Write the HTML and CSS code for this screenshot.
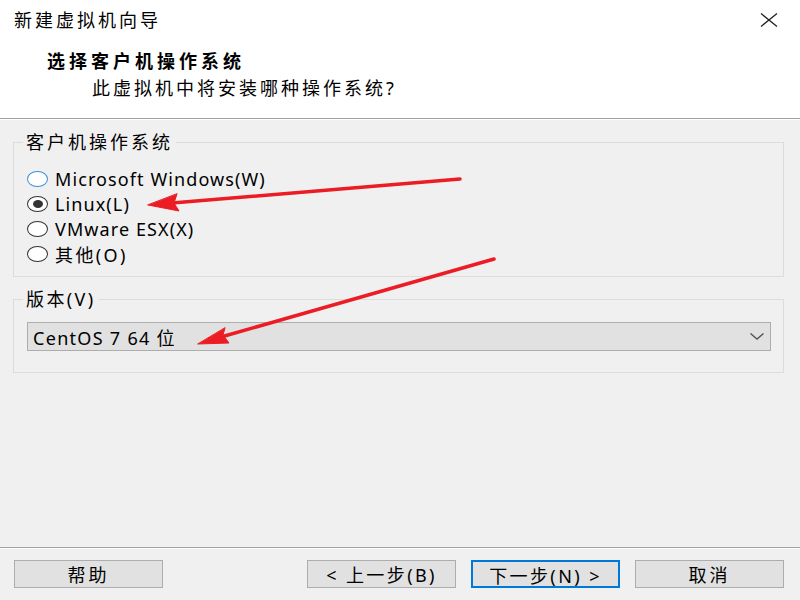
FILE: index.html
```html
<!DOCTYPE html>
<html lang="zh-CN">
<head>
	<meta charset="utf-8">
	<title>新建虚拟机向导</title>
	<link rel="stylesheet" href="styles.css">
</head>
<body>
<div class="wizard">
	<div class="header">
		<div class="titlebar">
			<span class="zh">新建虚拟机向导</span>
			<svg class="close" width="18" height="14" viewBox="0 0 18 14">
				<path d="M1 0.5 L17 13.5 M17 0.5 L1 13.5" stroke="#222" stroke-width="1.3" fill="none"/>
			</svg>
		</div>
		<div class="heading">选择客户机操作系统</div>
		<div class="subheading">此虚拟机中将安装哪种操作系统?</div>
	</div>

	<div class="content">
		<fieldset class="group os-group">
			<legend class="zh">客户机操作系统</legend>
			<div class="radio-row"><span class="radio focus"></span>Microsoft Windows(W)</div>
			<div class="radio-row"><span class="radio checked"></span>Linux(L)</div>
			<div class="radio-row"><span class="radio"></span>VMware ESX(X)</div>
			<div class="radio-row mixed"><span class="radio"></span>其他(O)</div>
		</fieldset>

		<fieldset class="group version-group">
			<legend class="mixed">版本(V)</legend>
			<div class="select">
				<span>CentOS 7 64 位</span>
				<svg width="14" height="7" viewBox="0 0 14 7">
					<path d="M0.5 0.5 L7 6 L13.5 0.5" stroke="#555" stroke-width="1.4" fill="none"/>
				</svg>
			</div>
		</fieldset>
	</div>

	<div class="footer">
		<button class="button zh">帮助</button>
		<div class="spacer"></div>
		<div class="nav">
			<button class="button mixed">&lt; 上一步(B)</button>
			<button class="button mixed default">下一步(N) &gt;</button>
			<button class="button zh">取消</button>
		</div>
	</div>

	<!-- red annotation arrows drawn over the dialog -->
	<svg class="arrows" width="800" height="600" viewBox="0 0 800 600">
		<g fill="#ec1c24" stroke="#ec1c24" stroke-linecap="round">
			<line x1="460" y1="179" x2="172" y2="203" stroke-width="3.5"/>
			<polygon points="148,205 179,211 174,203 177,194" stroke-width="1" stroke-linejoin="round"/>
			<line x1="494" y1="259" x2="221" y2="337" stroke-width="3.5"/>
			<polygon points="198,344 229,343 223,335 225,328" stroke-width="1" stroke-linejoin="round"/>
		</g>
	</svg>
</div>
</body>
</html>
```

FILE: styles.css
```css
body {
	margin: 0;
	background: #f0f0f0;
	font-family: "Noto Sans", "Noto Sans CJK SC", sans-serif;
	font-size: 18px;
	color: #000;
}

.wizard {
	position: relative;
	width: 800px;
	height: 600px;
	display: flex;
	flex-direction: column;
	overflow: hidden;
}

.zh {
	letter-spacing: 3px;
}

.mixed {
	letter-spacing: 2.4px;
}

/* white banner */
.header {
	height: 118px;
	background: #fff;
	border-bottom: 1px solid #a0a0a0;
}

.titlebar {
	display: flex;
	justify-content: space-between;
	align-items: center;
	height: 24px;
	line-height: 24px;
	padding: 8px 22px 0 14px;
}

.heading {
	margin: 17px 0 0 47px;
	line-height: 24px;
	font-weight: bold;
	letter-spacing: 4px;
}

.subheading {
	margin: 3px 0 0 92px;
	line-height: 24px;
	letter-spacing: 3px;
}

/* group boxes */
.content {
	flex: 1;
	border-top: 1px solid #fff;
}

.group {
	box-sizing: border-box;
	width: 771px;
	min-inline-size: 0;
	margin: 10px 0 0 13px;
	border: 1px solid #dcdcdc;
	padding: 12px 0 10px 13px;
}

.group legend {
	margin-left: -4px;
	padding: 0 3px;
	line-height: 24px;
}

.version-group {
	padding: 11px 0 21px 13px;
}

.radio-row {
	display: flex;
	align-items: center;
	height: 25px;
	letter-spacing: 1.1px;
}

.radio-row.mixed {
	letter-spacing: 2.4px;
}

.radio {
	box-sizing: border-box;
	width: 21px;
	height: 16px;
	margin-right: 7px;
	border: 1.3px solid #333;
	border-radius: 50%;
	background: #fff;
	display: flex;
	align-items: center;
	justify-content: center;
}

.radio.focus {
	border-color: #3c8fd8;
}

.radio.checked::after {
	content: "";
	width: 10px;
	height: 8px;
	border-radius: 50%;
	background: #333;
}

.select {
	box-sizing: border-box;
	width: 744px;
	height: 29px;
	display: flex;
	align-items: center;
	justify-content: space-between;
	padding: 0 6px 0 5px;
	border: 1px solid #adadad;
	background: #e1e1e1;
	letter-spacing: 1.3px;
}

/* buttons */
.footer {
	box-sizing: border-box;
	height: 53px;
	display: flex;
	align-items: flex-start;
	padding: 12px 16px 0 14px;
	border-top: 1px solid #a0a0a0;
	box-shadow: inset 0 1px #fff;
}

.spacer {
	flex: 1;
}

.nav {
	display: flex;
	gap: 15px;
}

.button {
	box-sizing: border-box;
	width: 149px;
	height: 28px;
	padding: 0;
	border: 1px solid #adadad;
	background: #e1e1e1;
	font: inherit;
	color: #000;
}

.button.default {
	border: 2px solid #0078d7;
}

.arrows {
	position: absolute;
	top: 0;
	left: 0;
	pointer-events: none;
}
```
